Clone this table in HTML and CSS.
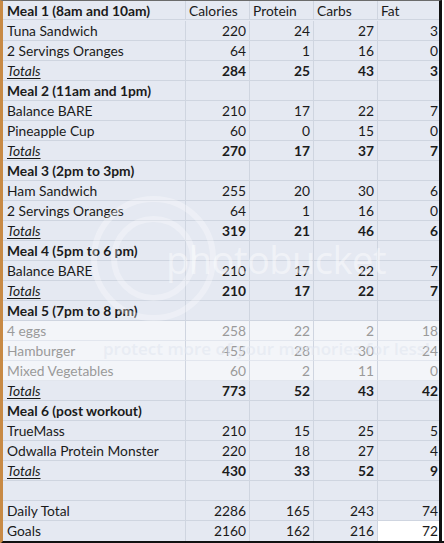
FILE: index.html
```html
<!DOCTYPE html>
<html>
<head>
<meta charset="utf-8">
<link rel="stylesheet" href="styles.css">
</head>
<body>
<div class="sheet">
  <div class="grid">
    <div class="c t b">Meal 1 (8am and 10am)</div><div class="c">Calories</div><div class="c">Protein</div><div class="c">Carbs</div><div class="c">Fat</div>
    <div class="c t">Tuna Sandwich</div><div class="c n">220</div><div class="c n">24</div><div class="c n">27</div><div class="c n">3</div>
    <div class="c t">2 Servings Oranges</div><div class="c n">64</div><div class="c n">1</div><div class="c n">16</div><div class="c n">0</div>
    <div class="c t tot">Totals</div><div class="c n b">284</div><div class="c n b">25</div><div class="c n b">43</div><div class="c n b">3</div>
    <div class="c t b">Meal 2 (11am and 1pm)</div><div class="c"></div><div class="c"></div><div class="c"></div><div class="c"></div>
    <div class="c t">Balance BARE</div><div class="c n">210</div><div class="c n">17</div><div class="c n">22</div><div class="c n">7</div>
    <div class="c t">Pineapple Cup</div><div class="c n">60</div><div class="c n">0</div><div class="c n">15</div><div class="c n">0</div>
    <div class="c t tot">Totals</div><div class="c n b">270</div><div class="c n b">17</div><div class="c n b">37</div><div class="c n b">7</div>
    <div class="c t b">Meal 3 (2pm to 3pm)</div><div class="c"></div><div class="c"></div><div class="c"></div><div class="c"></div>
    <div class="c t">Ham Sandwich</div><div class="c n">255</div><div class="c n">20</div><div class="c n">30</div><div class="c n">6</div>
    <div class="c t">2 Servings Oranges</div><div class="c n">64</div><div class="c n">1</div><div class="c n">16</div><div class="c n">0</div>
    <div class="c t tot">Totals</div><div class="c n b">319</div><div class="c n b">21</div><div class="c n b">46</div><div class="c n b">6</div>
    <div class="c t b">Meal 4 (5pm to 6 pm)</div><div class="c"></div><div class="c"></div><div class="c"></div><div class="c"></div>
    <div class="c t">Balance BARE</div><div class="c n">210</div><div class="c n">17</div><div class="c n">22</div><div class="c n">7</div>
    <div class="c t tot">Totals</div><div class="c n b">210</div><div class="c n b">17</div><div class="c n b">22</div><div class="c n b">7</div>
    <div class="c t b">Meal 5 (7pm to 8 pm)</div><div class="c"></div><div class="c"></div><div class="c"></div><div class="c"></div>
    <div class="c t f">4 eggs</div><div class="c n f">258</div><div class="c n f">22</div><div class="c n f">2</div><div class="c n f">18</div>
    <div class="c t f">Hamburger</div><div class="c n f">455</div><div class="c n f">28</div><div class="c n f">30</div><div class="c n f">24</div>
    <div class="c t f">Mixed Vegetables</div><div class="c n f">60</div><div class="c n f">2</div><div class="c n f">11</div><div class="c n f">0</div>
    <div class="c t tot">Totals</div><div class="c n b">773</div><div class="c n b">52</div><div class="c n b">43</div><div class="c n b">42</div>
    <div class="c t b">Meal 6 (post workout)</div><div class="c"></div><div class="c"></div><div class="c"></div><div class="c"></div>
    <div class="c t">TrueMass</div><div class="c n">210</div><div class="c n">15</div><div class="c n">25</div><div class="c n">5</div>
    <div class="c t">Odwalla Protein Monster</div><div class="c n">220</div><div class="c n">18</div><div class="c n">27</div><div class="c n">4</div>
    <div class="c t tot">Totals</div><div class="c n b">430</div><div class="c n b">33</div><div class="c n b">52</div><div class="c n b">9</div>
    <div class="c t"></div><div class="c"></div><div class="c"></div><div class="c"></div><div class="c"></div>
    <div class="c t">Daily Total</div><div class="c n">2286</div><div class="c n">165</div><div class="c n">243</div><div class="c n">74</div>
    <div class="c t">Goals</div><div class="c n">2160</div><div class="c n">162</div><div class="c n">216</div><div class="c n sel">72</div>
  </div>
  <div class="handle"></div>
  <div class="mark">
    <div class="ring r1"></div>
    <div class="ring r2"></div>
    <div class="logo">photobucket</div>
    <div class="tag">protect more of your memories for less!</div>
  </div>
</div>
</body>
</html>
```
FILE: styles.css
```css
* { box-sizing: border-box; }
html, body { margin: 0; padding: 0; background: #ffffff; }
body { width: 444px; height: 543px; overflow: hidden; }

.sheet {
  position: relative;
  width: 442px;
  border-left: 3px solid #c88a45;
  border-right: 3px solid #111;
  border-bottom: 3px solid #111;
  border-top: 1px solid #6b6b6b;
  background: #e5e9f2;
  font-family: Lato, "Liberation Sans", sans-serif;
  font-size: 13.8px;
  color: #1b1b1b;
}

.grid {
  display: grid;
  grid-template-columns: 183px 64px 64px 64px 61px;
  grid-auto-rows: 20px;
}
.grid > .c:nth-child(-n+5) { height: 19px; }

.c {
  border-bottom: 1px solid #cfd5e0;
  border-right: 1px solid #cfd5e0;
  padding: 0 3px 0 3px;
  line-height: 19px;
  white-space: nowrap;
  overflow: hidden;
}
.grid > .c:nth-child(5n) { border-right: none; padding-right: 1px; }
.grid > .c:nth-last-child(-n+5) { border-bottom: none; }

.t { padding-left: 4px; }
.n { text-align: right; }
.b { font-weight: 700; }
.tot { font-style: italic; text-decoration: underline; text-underline-offset: 2px; }
.f { background: #f3f5f9; color: #9a9a9a; border-bottom-color: #e2e6ee; }
.sel { background: #ffffff; }

.handle {
  position: absolute;
  right: -5px;
  bottom: -5px;
  width: 5px;
  height: 5px;
  background: #111;
}

.mark {
  position: absolute;
  inset: 0;
  pointer-events: none;
}
.ring {
  position: absolute;
  border-radius: 50%;
  border: 6px solid rgba(255,255,255,0.3);
}
.r1 { left: 88px; top: 195px; width: 125px; height: 125px; }
.r2 { left: 108px; top: 215px; width: 85px; height: 85px; }
.logo {
  position: absolute;
  left: 163px;
  top: 236px;
  font-family: "Open Sans", "Liberation Sans", sans-serif;
  font-size: 38px;
  line-height: 44px;
  color: rgba(255,255,255,0.45);
  letter-spacing: -0.5px;
}
.tag {
  position: absolute;
  left: 100px;
  top: 336px;
  font-family: "Open Sans", "Liberation Sans", sans-serif;
  font-size: 17px;
  line-height: 24px;
  font-weight: 600;
  color: rgba(225,230,240,0.6);
  white-space: nowrap;
}
```
